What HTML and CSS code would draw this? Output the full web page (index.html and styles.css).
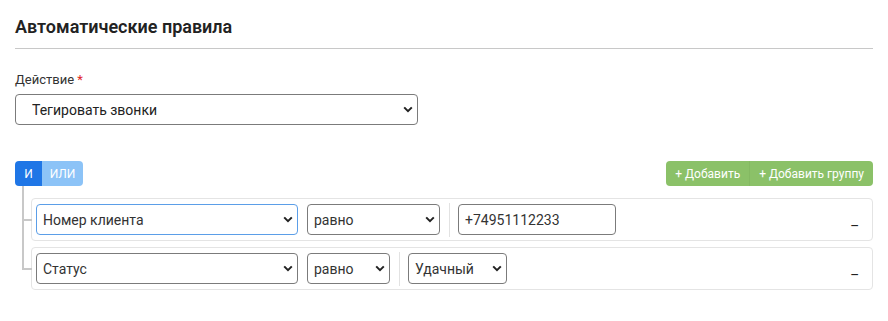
FILE: index.html
```html
<!DOCTYPE html>
<html lang="ru">
<head>
    <meta charset="UTF-8">
    <meta name="viewport" content="width=device-width, initial-scale=1.0">
    <title>Автоматические правила</title>
    <link rel="stylesheet" href="styles.css">
</head>
<body>
<h2 class="title">Автоматические правила</h2>

<div class="field">
    <label for="action">Действие <span class="req">*</span></label>
    <select id="action" class="select action-select">
        <option>Тегировать звонки</option>
    </select>
</div>

<div class="builder">
    <div class="builder-head">
        <div class="btn-group">
            <button class="btn btn-and">И</button>
            <button class="btn btn-or">ИЛИ</button>
        </div>
        <div class="btn-group">
            <button class="btn btn-add">+ Добавить</button>
            <button class="btn btn-add">+ Добавить группу</button>
        </div>
    </div>

    <div class="rules">
        <div class="rule">
            <select class="select focused w-field"><option>Номер клиента</option></select>
            <select class="select w-op-wide"><option>равно</option></select>
            <span class="sep"></span>
            <input class="input w-value" type="text" value="+74951112233">
            <button class="remove">_</button>
        </div>
        <div class="rule">
            <select class="select w-field"><option>Статус</option></select>
            <select class="select w-op"><option>равно</option></select>
            <span class="sep"></span>
            <select class="select w-status"><option>Удачный</option></select>
            <button class="remove">_</button>
        </div>
    </div>
</div>
</body>
</html>
```

FILE: styles.css
```css
body {
    font-family: Roboto, "Noto Sans", Arial, sans-serif;
    color: #333;
    margin: 0;
    padding: 0 15px;
    background: #fff;
}
.title {
    font-size: 18px;
    font-weight: 600;
    color: #222;
    margin: 0;
    padding: 16px 0 11px;
    border-bottom: 1px solid #c8c8c8;
}
.field {
    margin-top: 23px;
}
.field label {
    display: block;
    font-size: 13px;
    color: #333;
    margin-bottom: 7px;
}
.req {
    color: #e02424;
}
.select, .input {
    font-family: inherit;
    font-size: 14px;
    color: #333;
    height: 31px;
    border: 1px solid #7b7b7b;
    border-radius: 4px;
    background: #fff;
    padding: 0 6px;
    box-sizing: border-box;
}
.select {
    -webkit-appearance: none;
    appearance: none;
    padding-right: 20px;
    background-image: url("data:image/svg+xml,%3Csvg xmlns='http://www.w3.org/2000/svg' width='10' height='7' viewBox='0 0 10 7'%3E%3Cpath d='M1.2 1.4 5 5.2 8.8 1.4' fill='none' stroke='%23222' stroke-width='2'/%3E%3C/svg%3E");
    background-repeat: no-repeat;
    background-position: right 4px center;
}
.action-select {
    width: 403px;
    padding-left: 16px;
    color: #222;
}
.builder {
    margin-top: 36px;
}
.builder-head {
    display: flex;
    justify-content: space-between;
}
.btn-group {
    display: flex;
    border-radius: 4px;
    overflow: hidden;
}
.btn {
    font-family: inherit;
    font-size: 12px;
    color: #fff;
    border: none;
    height: 25px;
    padding: 0 9px;
    cursor: pointer;
}
.btn-and {
    background: #1f76e6;
    width: 27px;
    padding: 0;
}
.btn-or {
    background: #8cc3f7;
    width: 41px;
    padding: 0;
}
.btn-add {
    background: #8bc168;
}
.btn-add + .btn-add {
    border-left: 1px solid #84b962;
}
.rules {
    margin-top: 12px;
    margin-left: 16px;
    display: flex;
    flex-direction: column;
    gap: 6px;
}
.rule {
    position: relative;
    display: flex;
    align-items: center;
    gap: 9px;
    height: 43px;
    padding: 0 14px 0 4px;
    border: 1px solid #e4e4e4;
    border-radius: 4px;
    box-sizing: border-box;
}
.rule::before {
    content: "";
    position: absolute;
    left: -10px;
    top: 20px;
    width: 10px;
    border-top: 2px solid #c8c8c8;
}
.rule::after {
    content: "";
    position: absolute;
    left: -10px;
    top: -13px;
    height: 35px;
    border-left: 2px solid #c8c8c8;
}
.rule + .rule::after {
    top: -27px;
    height: 49px;
    border-bottom-left-radius: 3px;
}
.focused {
    border-color: #5b9ee8;
}
.w-field { width: 262px; }
.w-op-wide { width: 133px; }
.w-op { width: 83px; }
.w-status { width: 99px; }
.w-value { width: 158px; }
.sep {
    width: 1px;
    height: 34px;
    margin-right: -1px;
    background: #e2e2e2;
}
.remove {
    margin-left: auto;
    border: none;
    background: none;
    font-family: inherit;
    font-size: 15px;
    color: #222;
    padding: 0;
    cursor: pointer;
}
```
